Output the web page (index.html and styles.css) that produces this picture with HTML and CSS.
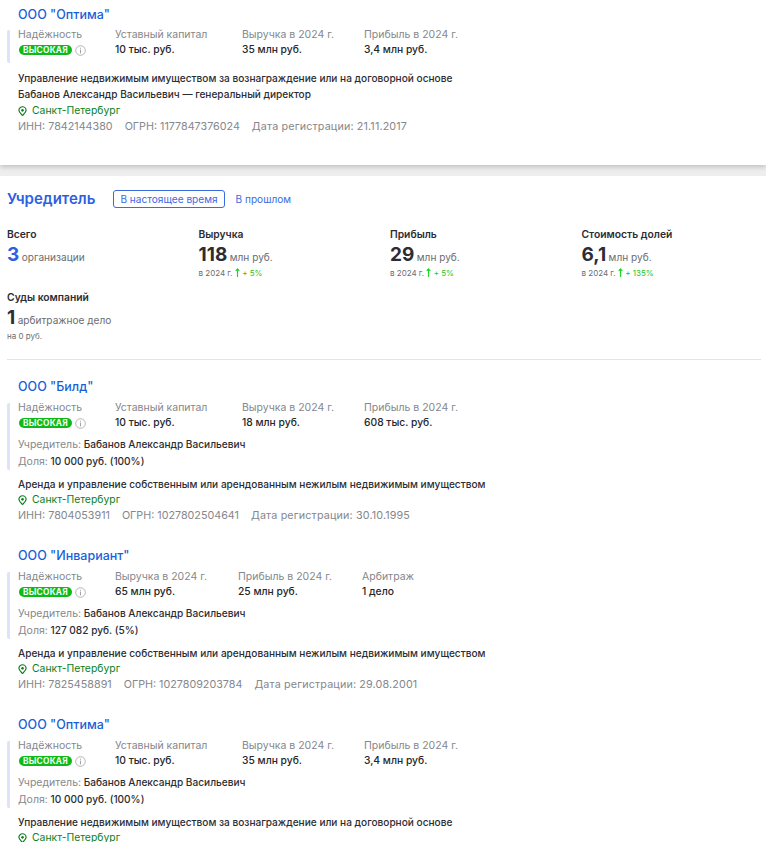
FILE: index.html
```html
<!DOCTYPE html>
<html lang="ru">
<head>
<meta charset="utf-8">
<title>Учредитель</title>
<link rel="stylesheet" href="styles.css">
</head>
<body>
<svg class="defs" width="0" height="0" aria-hidden="true">
  <symbol id="info" viewBox="0 0 11 11"><circle cx="5.5" cy="5.5" r="4.8" fill="none" stroke="#a3a3a3" stroke-width=".8"/><rect x="5" y="4.6" width="1" height="3.8" fill="#a3a3a3"/><rect x="5" y="2.7" width="1" height="1" fill="#a3a3a3"/></symbol>
  <symbol id="pin" viewBox="0 0 10 11"><path d="M5 .8a4 4 0 0 1 4 4c0 2.4-2.3 4-4 5.6-1.7-1.6-4-3.2-4-5.6a4 4 0 0 1 4-4z" fill="none" stroke="#0a7f1c" stroke-width="1.3"/><circle cx="5" cy="4.8" r="1.4" fill="#0a7f1c"/></symbol>
  <symbol id="up" viewBox="0 0 5 10"><path d="M2.5 10V1.2M.5 3.2 2.5 1l2 2.2" fill="none" stroke="#1ed42c" stroke-width="1.3"/></symbol>
</svg>

<section class="card card-top">
  <a class="title">ООО "Оптима"</a>
  <div class="facts facts-short">
    <div class="metrics">
      <div class="metric"><span class="label">Надёжность</span><span class="rating"><b class="badge">ВЫСОКАЯ</b><svg class="info"><use href="#info"/></svg></span></div>
      <div class="metric"><span class="label">Уставный капитал</span><span class="value">10 тыс. руб.</span></div>
      <div class="metric"><span class="label">Выручка в 2024 г.</span><span class="value">35 млн руб.</span></div>
      <div class="metric"><span class="label">Прибыль в 2024 г.</span><span class="value">3,4 млн руб.</span></div>
    </div>
  </div>
  <p class="line activity">Управление недвижимым имуществом за вознаграждение или на договорной основе</p>
  <p class="line">Бабанов Александр Васильевич — генеральный директор</p>
  <p class="line city"><svg class="pin"><use href="#pin"/></svg>Санкт-Петербург</p>
  <p class="line ids"><span>ИНН: 7842144380</span><span>ОГРН: 1177847376024</span><span>Дата регистрации: 21.11.2017</span></p>
</section>

<main class="founder">
  <header class="founder-head">
    <h2>Учредитель</h2>
    <span class="tab tab-active">В настоящее время</span>
    <span class="tab">В прошлом</span>
  </header>

  <div class="stats">
    <div class="stat"><h3>Всего</h3><p class="num"><strong class="blue">3</strong>организации</p></div>
    <div class="stat"><h3>Выручка</h3><p class="num"><strong>118</strong>млн руб.</p><p class="sub">в 2024 г. <svg class="up"><use href="#up"/></svg> <em>+ 5%</em></p></div>
    <div class="stat"><h3>Прибыль</h3><p class="num"><strong>29</strong>млн руб.</p><p class="sub">в 2024 г. <svg class="up"><use href="#up"/></svg> <em>+ 5%</em></p></div>
    <div class="stat"><h3>Стоимость долей</h3><p class="num"><strong>6,1</strong>млн руб.</p><p class="sub">в 2024 г. <svg class="up"><use href="#up"/></svg> <em>+ 135%</em></p></div>
    <div class="stat"><h3>Суды компаний</h3><p class="num"><strong>1</strong>арбитражное дело</p><p class="sub">на 0 руб.</p></div>
  </div>

  <div class="companies">
    <article class="card">
      <a class="title">ООО "Билд"</a>
      <div class="facts">
        <div class="metrics">
          <div class="metric"><span class="label">Надёжность</span><span class="rating"><b class="badge">ВЫСОКАЯ</b><svg class="info"><use href="#info"/></svg></span></div>
          <div class="metric"><span class="label">Уставный капитал</span><span class="value">10 тыс. руб.</span></div>
          <div class="metric"><span class="label">Выручка в 2024 г.</span><span class="value">18 млн руб.</span></div>
          <div class="metric"><span class="label">Прибыль в 2024 г.</span><span class="value">608 тыс. руб.</span></div>
        </div>
        <p class="share owner"><span class="label">Учредитель:</span> Бабанов Александр Васильевич</p>
        <p class="share"><span class="label">Доля:</span> 10 000 руб. (100%)</p>
      </div>
      <p class="line activity">Аренда и управление собственным или арендованным нежилым недвижимым имуществом</p>
      <p class="line city"><svg class="pin"><use href="#pin"/></svg>Санкт-Петербург</p>
      <p class="line ids"><span>ИНН: 7804053911</span><span>ОГРН: 1027802504641</span><span>Дата регистрации: 30.10.1995</span></p>
    </article>

    <article class="card">
      <a class="title">ООО "Инвариант"</a>
      <div class="facts">
        <div class="metrics metrics-alt">
          <div class="metric"><span class="label">Надёжность</span><span class="rating"><b class="badge">ВЫСОКАЯ</b><svg class="info"><use href="#info"/></svg></span></div>
          <div class="metric"><span class="label">Выручка в 2024 г.</span><span class="value">65 млн руб.</span></div>
          <div class="metric"><span class="label">Прибыль в 2024 г.</span><span class="value">25 млн руб.</span></div>
          <div class="metric"><span class="label">Арбитраж</span><span class="value">1 дело</span></div>
        </div>
        <p class="share owner"><span class="label">Учредитель:</span> Бабанов Александр Васильевич</p>
        <p class="share"><span class="label">Доля:</span> 127 082 руб. (5%)</p>
      </div>
      <p class="line activity">Аренда и управление собственным или арендованным нежилым недвижимым имуществом</p>
      <p class="line city"><svg class="pin"><use href="#pin"/></svg>Санкт-Петербург</p>
      <p class="line ids"><span>ИНН: 7825458891</span><span>ОГРН: 1027809203784</span><span>Дата регистрации: 29.08.2001</span></p>
    </article>

    <article class="card">
      <a class="title">ООО "Оптима"</a>
      <div class="facts">
        <div class="metrics">
          <div class="metric"><span class="label">Надёжность</span><span class="rating"><b class="badge">ВЫСОКАЯ</b><svg class="info"><use href="#info"/></svg></span></div>
          <div class="metric"><span class="label">Уставный капитал</span><span class="value">10 тыс. руб.</span></div>
          <div class="metric"><span class="label">Выручка в 2024 г.</span><span class="value">35 млн руб.</span></div>
          <div class="metric"><span class="label">Прибыль в 2024 г.</span><span class="value">3,4 млн руб.</span></div>
        </div>
        <p class="share owner"><span class="label">Учредитель:</span> Бабанов Александр Васильевич</p>
        <p class="share"><span class="label">Доля:</span> 10 000 руб. (100%)</p>
      </div>
      <p class="line activity">Управление недвижимым имуществом за вознаграждение или на договорной основе</p>
      <p class="line city"><svg class="pin"><use href="#pin"/></svg>Санкт-Петербург</p>
    </article>
  </div>
</main>
</body>
</html>
```
FILE: styles.css
```css
* { box-sizing: border-box; }
html, body { height: 842px; overflow: hidden; }
body { margin: 0; background: #eeeeee; color: #2b2d33; font: 400 10.1px/16px Inter, "Liberation Sans", sans-serif; }
.defs { position: absolute; }
p, h2, h3 { margin: 0; }

.card { display: flex; flex-direction: column; padding-left: 18px; }
.card-top { height: 165px; padding-top: 6px; background: #fff; box-shadow: 0 2px 5px rgba(0,0,0,.2); position: relative; z-index: 1; margin-bottom: 11px; }
.title { color: #1a5fd8; font-size: 12.5px; line-height: 18px; font-weight: 500; }
.facts { margin: 7px 0 0 -11px; padding-left: 8px; border-left: 3px solid #dfe3fa; border-radius: 2px; }
.facts-short { margin-top: 6px; padding-bottom: 6px; }
.metrics { display: grid; grid-template-columns: 97px 127px 122px auto; }
.metrics-alt { grid-template-columns: 97px 123px 124px auto; }
.metric { display: flex; flex-direction: column; gap: 2px; }
.label { color: #85878c; font-size: 10.5px; }
.metric .label { line-height: 10px; }
.value { color: #25272c; line-height: 15px; font-weight: 500; font-size: 10.3px; }
.rating { display: flex; align-items: center; gap: 3px; height: 15px; padding-left: 1px; }
.badge { background: #10b91a; color: #f2fff2; border-radius: 5px; font-size: 8.3px; font-weight: 700; line-height: 10px; padding: 0 4px; letter-spacing: .25px; }
.info { width: 11px; height: 11px; margin-top: 1px; }
.share { line-height: 17px; font-weight: 500; }
.share .label { font-weight: 400; }
.owner { margin-top: 6px; }
.line { line-height: 16.4px; font-weight: 500; }
.activity { margin-top: 5.5px; }
.facts-short + .activity { margin-top: 7px; }
.city { color: #0a7f1c; display: flex; align-items: center; gap: 5px; font-weight: 400; font-size: 10.4px; }
.pin { width: 9px; height: 10px; }
.ids { color: #85878c; display: flex; gap: 12px; font-size: 10.75px; font-weight: 400; }
.ids span:last-child { letter-spacing: .15px; }

.founder { padding: 0 5px 0 7px; position: relative; background: #fff; min-height: 666px; }
.founder-head { display: flex; align-items: center; height: 50px; padding-bottom: 4px; }
.founder-head h2 { color: #2f5fe0; font-size: 15px; font-weight: 600; margin-right: 18px; }
.tab { color: #3c6be0; line-height: 16px; padding: 0 6px; border: 1px solid transparent; border-radius: 3px; margin-right: 4px; }
.tab-active { border-color: #3c6be0; }

.stats { display: grid; grid-template-columns: repeat(4, 191.5px); row-gap: 10px; padding-bottom: 17px; border-bottom: 1px solid #e4e4e4; }
.stat h3 { font-size: 10.3px; font-weight: 600; line-height: 16px; }
.num { display: flex; align-items: baseline; gap: 2.5px; color: #6b6d72; line-height: 22px; margin-top: 2px; }
.num strong { color: #2b2d33; font-size: 19px; font-weight: 700; }
.num strong.blue { color: #2f5fe0; }
.sub { color: #6b6d72; font-size: 8px; line-height: 11px; }
.sub em { color: #1ec42a; font-style: normal; }
.up { width: 5px; height: 9px; vertical-align: -1px; }

.companies { margin-left: -7px; padding-top: 18px; display: flex; flex-direction: column; gap: 22.4px; }
```
